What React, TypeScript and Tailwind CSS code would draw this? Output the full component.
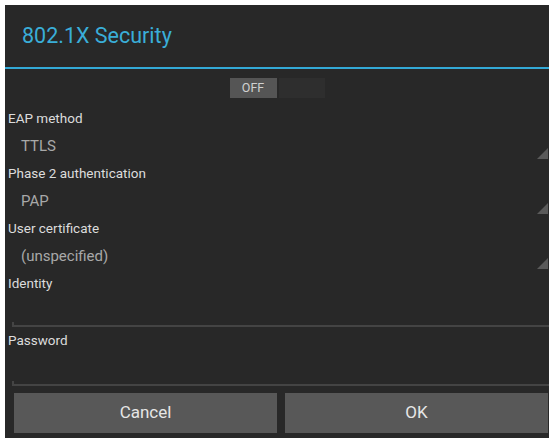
export default function App() {
  const spinners = [
    { label: "EAP method", value: "TTLS" },
    { label: "Phase 2 authentication", value: "PAP" },
    { label: "User certificate", value: "(unspecified)" },
  ];

  return (
    <div className="h-[444px] w-[554px] bg-white pl-[5px] pt-[5px] font-['Roboto',sans-serif]">
      <div className="flex h-[433px] w-[544px] flex-col bg-[#282828]">
        {/* header */}
        <div className="flex h-[62px] items-center pl-[17px] text-[21.5px] text-[#3aaed8]">
          802.1X Security
        </div>
        <div className="h-[2px] bg-[#33a9d6]" />

        {/* toggle */}
        <div className="flex h-[36px] items-center justify-center pt-[2px]">
          <div className="flex h-[20px]">
            <div className="flex w-[47px] items-center justify-center bg-[#555555] text-[12.5px] text-[#d0d0d0]">
              OFF
            </div>
            <div className="ml-[2px] w-[46px] bg-[#2e2e2e]" />
          </div>
        </div>

        {/* spinners */}
        {spinners.map((s) => (
          <div key={s.label}>
            <div className="flex h-[27px] items-center pl-[3px] text-[13.5px] text-[#dcdcdc]">
              {s.label}
            </div>
            <div className="relative flex h-[28px] items-center pl-[16px] text-[15px] text-[#a8a8a8]">
              {s.value}
              <svg
                className="absolute bottom-[1px] right-[1px]"
                width="11"
                height="11"
                viewBox="0 0 11 11"
              >
                <polygon points="11,0 11,11 0,11" fill="#5a5a5a" />
              </svg>
            </div>
          </div>
        ))}

        {/* identity */}
        <div className="flex h-[26px] items-center pl-[3px] text-[13.5px] text-[#dcdcdc]">
          Identity
        </div>
        <div className="relative ml-[7px] h-[31px] border-b-2 border-[#444444]">
          <div className="absolute bottom-[-2px] left-0 h-[5px] w-[2px] bg-[#444444]" />
        </div>

        {/* password */}
        <div className="flex h-[26px] items-center pl-[3px] text-[13.5px] text-[#dcdcdc]">
          Password
        </div>
        <div className="relative ml-[7px] h-[33px] border-b-2 border-[#444444]">
          <div className="absolute bottom-[-2px] left-0 h-[5px] w-[2px] bg-[#444444]" />
        </div>

        {/* buttons */}
        <div className="flex gap-[8px] pl-[9px] pr-[1px] pt-[7px]">
          <button className="h-[40px] flex-1 bg-[#585858] text-[17px] text-[#e6e6e6]">
            Cancel
          </button>
          <button className="h-[40px] flex-1 bg-[#585858] text-[17px] text-[#e6e6e6]">
            OK
          </button>
        </div>
      </div>
    </div>
  );
}
